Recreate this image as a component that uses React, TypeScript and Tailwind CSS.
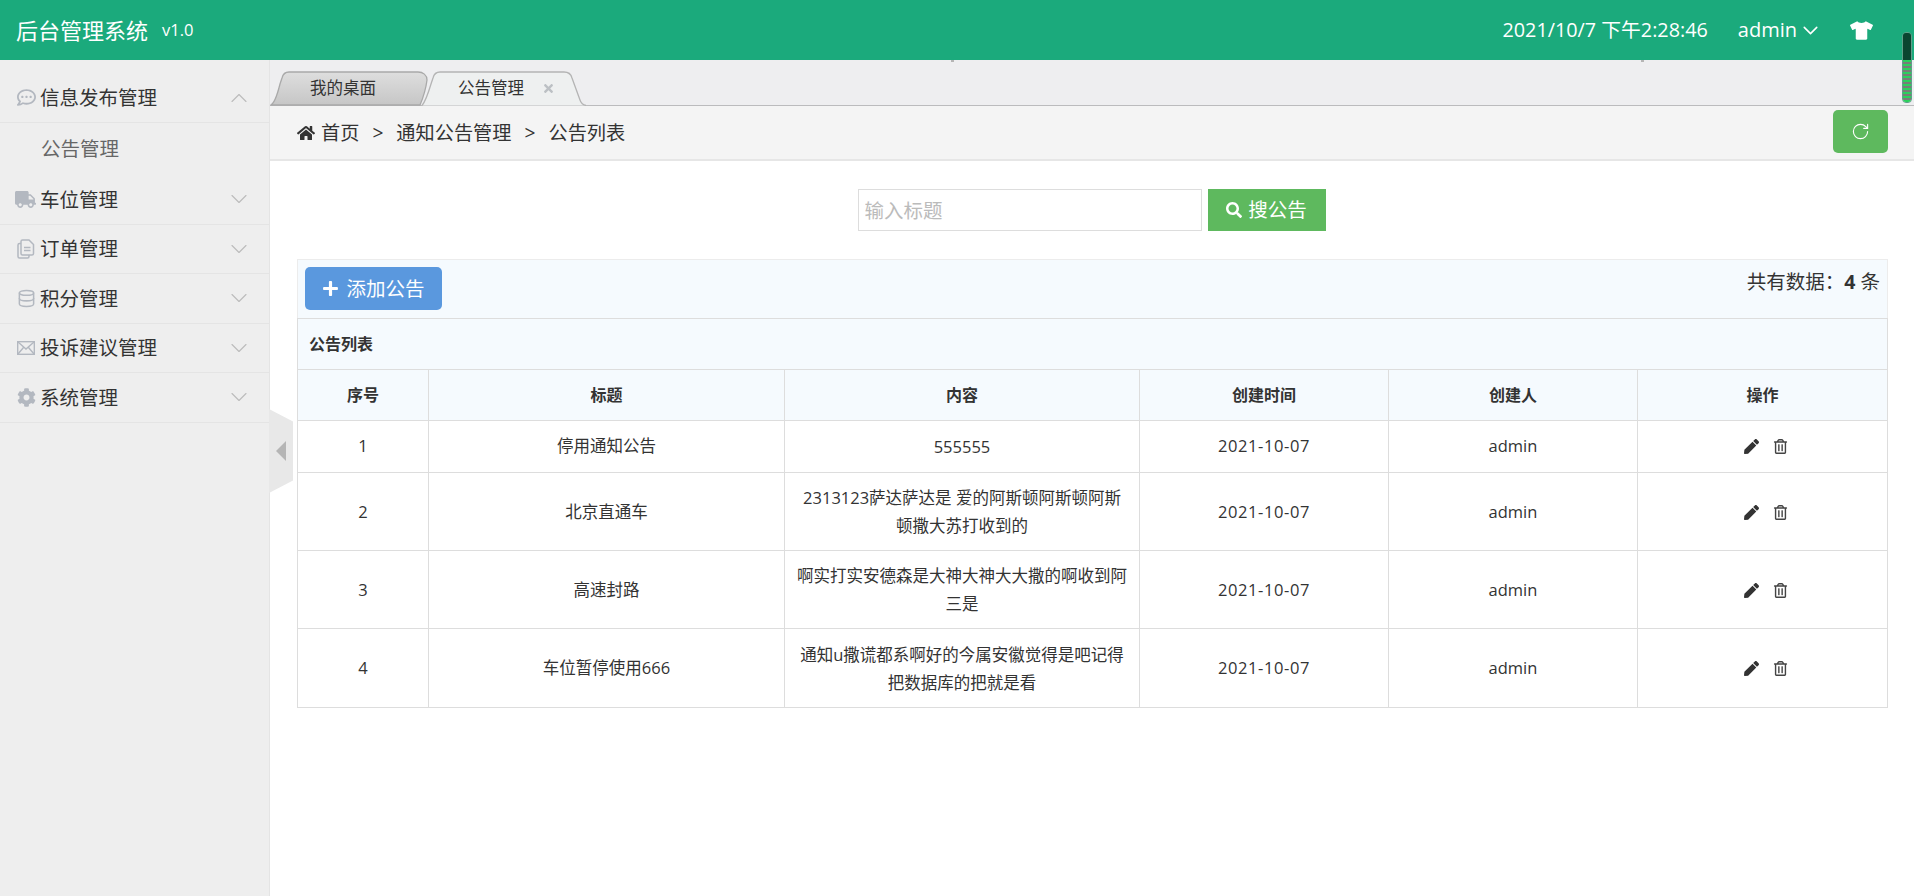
import { ChevronDown, ChevronUp, Database, RotateCw } from "lucide-react";
import { FaCog, FaHome, FaPen, FaPlus, FaRegCommentDots, FaRegTrashAlt, FaSearch, FaTimes, FaTruck, FaTshirt } from "react-icons/fa";
import type { ReactNode } from "react";

function OrderIcon() {
  return (
    <svg width="18" height="20" viewBox="0 0 18 20" fill="none" stroke="currentColor" strokeWidth="1.5">
      <path d="M4 4.500H2.500A1.500 1.500 0 0 0 1 6v11.500A1.500 1.500 0 0 0 2.500 19h8A1.500 1.500 0 0 0 12 17.500V16" />
      <path d="M5.500 1h6.500l4.500 4.500v9a1.500 1.500 0 0 1-1.500 1.500H5.500A1.500 1.500 0 0 1 4 14.500V2.500A1.500 1.500 0 0 1 5.500 1z" />
      <path d="M7 8.500h6.500M7 11.500h6.500" />
    </svg>
  );
}

function MailIcon() {
  return (
    <svg width="18" height="14" viewBox="0 0 18 14" fill="none" stroke="currentColor" strokeWidth="1.4">
      <rect x="0.700" y="0.700" width="16.600" height="12.600" />
      <path d="M1 1l8 7 8-7M1 13l5.500-6.500M17 13l-5.500-6.500" />
    </svg>
  );
}

const menus: { icon: ReactNode; label: string; open?: boolean }[] = [
  { icon: <FaRegCommentDots size={19} className="shrink-0" />, label: "信息发布管理", open: true },
  { icon: <FaTruck size={21} className="shrink-0 -translate-x-[1px]" />, label: "车位管理" },
  { icon: <OrderIcon />, label: "订单管理" },
  { icon: <Database size={19} strokeWidth={1.9} className="shrink-0" />, label: "积分管理" },
  { icon: <MailIcon />, label: "投诉建议管理" },
  { icon: <FaCog size={19} className="shrink-0" />, label: "系统管理" },
];

const rows = [
  { id: 1, title: "停用通知公告", content: "555555" },
  { id: 2, title: "北京直通车", content: "2313123萨达萨达是 爱的阿斯顿阿斯顿阿斯顿撒大苏打收到的" },
  { id: 3, title: "高速封路", content: "啊实打实安德森是大神大神大大撒的啊收到阿三是" },
  { id: 4, title: "车位暂停使用666", content: "通知u撒谎都系啊好的今属安徽觉得是吧记得把数据库的把就是看" },
];

function MenuRow({ icon, label, open }: { icon: ReactNode; label: string; open?: boolean }) {
  return (
    <div className={`flex items-center pl-[17px] pr-[16px] ${open ? "h-[50px] border-b border-[#e4e4e4]" : "h-[49.5px] border-b border-[#e4e4e4]"}`}>
      <span className="flex w-[18px] justify-center text-[#b3b8c0]">{icon}</span>
      <span className="ml-[5px] text-[19.5px] text-[#333]">{label}</span>
      <span className="ml-auto text-[#bcbcbc]">
        {open ? <ChevronUp size={28} strokeWidth={1} /> : <ChevronDown size={28} strokeWidth={1} />}
      </span>
    </div>
  );
}

function Tabs() {
  return (
    <div className="relative h-[46px] bg-[#eeeef0] border-b border-[#bbbbbd]">
      <svg className="absolute left-0 top-0" width="330" height="46" viewBox="0 0 330 46">
        <defs>
          <linearGradient id="tabg" x1="0" y1="0" x2="0" y2="1">
            <stop offset="0" stopColor="#dedede" />
            <stop offset="1" stopColor="#c6c6c6" />
          </linearGradient>
        </defs>
        <path d="M0.500 45 C4 44 7 36 10 24 L12 18 C13 14 15 12 19 12 H148 C153 12 157 15 157 20 C156 28 153 38 150 45 Z" fill="url(#tabg)" stroke="#a9a9a9" strokeWidth="1.3" />
        <path d="M152 45.500 C155 42 158 34 161 24 L163 18 C164 14 166 12 170 12 H294 C299 12 301 14 302 18 L310 40 C311 43 313 45 316 45.500" fill="#eef0f0" stroke="#b4b4b4" strokeWidth="1.3" />
      </svg>
      <div className="relative flex h-full items-center pt-[12px] text-[16.5px] text-[#333]">
        <span className="ml-[40px]">我的桌面</span>
        <span className="ml-[82px]">公告管理</span>
        <FaTimes size={13} className="ml-[18px] text-[#bcc0c4]" />
      </div>
    </div>
  );
}

function Breadcrumb() {
  return (
    <div className="flex h-[55px] items-center justify-between border-b-2 border-[#e6e6e6] bg-[#f4f4f4] pl-[27px] pr-[26px] text-[19.2px] text-[#333]">
      <div className="mt-[1px] flex items-center">
        <FaHome size={18} className="text-[#333]" />
        <span className="ml-[6px]">首页</span>
        <span className="mx-[13px] font-medium">&gt;</span>
        <span>通知公告管理</span>
        <span className="mx-[13px] font-medium">&gt;</span>
        <span>公告列表</span>
      </div>
      <button className="mb-[2px] flex h-[43px] w-[55px] items-center justify-center rounded-[5px] bg-[#5eb95e] text-white">
        <RotateCw size={19} strokeWidth={1.4} />
      </button>
    </div>
  );
}

function Toolbar() {
  return (
    <div className="flex h-[59px] items-start justify-between border border-b-0 border-[#ececec] bg-[#f5fafe] pl-[7px] pr-[7px] pt-[7px]">
      <button className="flex h-[43px] w-[137px] items-center justify-center gap-[7px] rounded-[5px] bg-[#5a98de] text-[19.5px] text-white">
        <FaPlus size={17} />
        添加公告
      </button>
      <span className="text-[19.5px] leading-[30px] text-[#333]">
        共有数据：<b className="font-bold">4</b> 条
      </span>
    </div>
  );
}

function NoticeTable() {
  const head = ["序号", "标题", "内容", "创建时间", "创建人", "操作"];
  return (
    <table className="w-full table-fixed border-collapse border border-[#dddddd] text-center text-[16.5px] text-[#333]">
      <colgroup>
        <col className="w-[131px]" />
        <col className="w-[356px]" />
        <col className="w-[355px]" />
        <col className="w-[249px]" />
        <col className="w-[249px]" />
        <col className="w-[250px]" />
      </colgroup>
      <thead className="bg-[#f5fafe]">
        <tr className="h-[51px]">
          <th colSpan={6} className="border border-[#dddddd] pl-[11px] text-left text-[16px] font-bold">公告列表</th>
        </tr>
        <tr className="h-[51px]">
          {head.map((h) => (
            <th key={h} className="border border-[#dddddd] text-[16px] font-bold">{h}</th>
          ))}
        </tr>
      </thead>
      <tbody>
        {rows.map((r) => (
          <tr key={r.id} className={r.id === 1 ? "h-[52px]" : r.id === 4 ? "h-[79px]" : "h-[78px]"}>
            <td className={`border border-[#dddddd] ${r.id > 1 ? "pt-[1px]" : ""}`}>{r.id}</td>
            <td className={`border border-[#dddddd] ${r.id > 1 ? "pt-[1px]" : ""}`}>{r.title}</td>
            <td className={`border border-[#dddddd] px-[10px] leading-[28px] ${r.id > 1 ? "pt-[1px]" : ""}`}>{r.content}</td>
            <td className={`border border-[#dddddd] tracking-[0.6px] ${r.id > 1 ? "pt-[1px]" : ""}`}>2021-10-07</td>
            <td className={`border border-[#dddddd] ${r.id > 1 ? "pt-[1px]" : ""}`}>admin</td>
            <td className={`border border-[#dddddd] ${r.id > 1 ? "pt-[1px]" : ""}`}>
              <div className="flex items-center justify-center gap-[14px] pl-[6px]">
                <FaPen size={15} />
                <FaRegTrashAlt size={15} className="text-[#444]" />
              </div>
            </td>
          </tr>
        ))}
      </tbody>
    </table>
  );
}

export default function App() {
  return (
    <div className="relative flex h-[896px] w-[1914px] flex-col overflow-hidden bg-white font-['Open_Sans','Noto_Sans_CJK_SC',sans-serif]">
      <header className="flex h-[60px] shrink-0 items-center bg-[#1baa7c] pl-[16px] text-white">
        <span className="text-[22px]">后台管理系统</span>
        <span className="ml-[14px] text-[16.5px]">v1.0</span>
        <span className="ml-auto text-[19.8px]">2021/10/7 下午2:28:46</span>
        <span className="ml-[30px] text-[20px]">admin</span>
        <ChevronDown size={25} strokeWidth={1.5} className="ml-[1px]" />
        <FaTshirt size={23} className="ml-[27px] mr-[41px]" />
      </header>

      <div className="flex min-h-0 flex-1">
        <aside className="w-[270px] shrink-0 border-r border-[#e4e4e4] bg-[#eeeeee] pt-[13px]">
          <MenuRow {...menus[0]} />
          <div className="flex h-[52px] items-center pl-[41px] text-[19.5px] text-[#666]">公告管理</div>
          {menus.slice(1).map((m) => (
            <MenuRow key={m.label} {...m} />
          ))}
        </aside>

        <main className="relative min-w-0 flex-1">
          <Tabs />
          <Breadcrumb />
          <div className="px-[26px] pl-[27px]">
            <form className="mt-[28px] flex justify-center gap-[6px] pr-[2px]">
              <input
                placeholder="输入标题"
                className="h-[42px] w-[344px] border border-[#dddddd] bg-white px-[6px] text-[19.5px] outline-none placeholder:text-[#bbbbbb]"
              />
              <button type="button" className="flex h-[42px] w-[118px] items-center justify-center gap-[6px] bg-[#5eb95e] text-[19.5px] text-white">
                <FaSearch size={16} />
                搜公告
              </button>
            </form>
            <div className="mt-[28px]">
              <Toolbar />
              <NoticeTable />
            </div>
          </div>
          {/* sidebar collapse handle */}
          <div className="absolute left-[-1px] top-[349px] flex h-[84px] w-[24px] items-center justify-center bg-[#e8e8e8] [clip-path:polygon(0_0,100%_15%,100%_85%,0_100%)]">
            <span className="h-0 w-0 border-y-[10px] border-r-[10px] border-y-transparent border-r-[#b5b5b5]" />
          </div>
        </main>
      </div>

      {/* meter overlay in the corner */}
      <div className="absolute left-[1902px] top-[32px] h-[71px] w-[10px] overflow-hidden rounded-[4px] border border-[#5f9f8a]">
        <div className="h-[27px] bg-[#0a4530]" />
        <div className="h-[44px] bg-[repeating-linear-gradient(180deg,#2bd05c_0px,#2bd05c_2px,#7a7a7a_2px,#7a7a7a_4px)]" />
      </div>
      <span className="absolute left-[1641px] top-[60px] h-[2px] w-[3px] bg-[#b5b5b5]" />
      <span className="absolute left-[951px] top-[60px] h-[2px] w-[3px] bg-[#b5b5b5]" />
    </div>
  );
}
